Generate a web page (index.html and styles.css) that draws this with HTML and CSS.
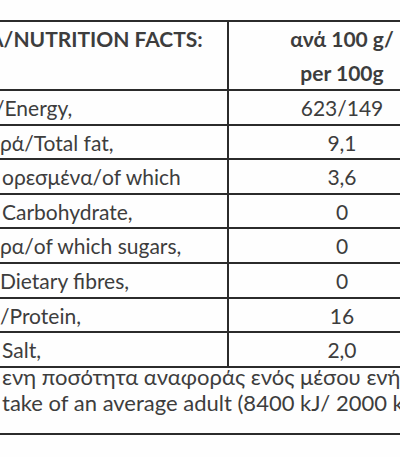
FILE: index.html
```html
<!DOCTYPE html>
<html lang="el">
    <head>
        <meta charset="UTF-8" />
        <meta name="viewport" content="width=device-width, initial-scale=1.0" />
        <link rel="stylesheet" href="styles.css">
        <title>Nutrition facts</title>
    </head>
    <body>
        <main class="label">
            <section class="facts">
                <div class="cell name head"><span class="cut cut-a">Α</span>/NUTRITION FACTS:</div>
                <div class="cell value head">ανά 100 g/<br />per 100g</div>

                <div class="cell name"><span class="cut cut-slash">/</span>Energy,</div>
                <div class="cell value">623/149</div>

                <div class="cell name">ρά/Total fat,</div>
                <div class="cell value">9,1</div>

                <div class="cell name indent">ορεσμένα/of which</div>
                <div class="cell value">3,6</div>

                <div class="cell name indent">Carbohydrate,</div>
                <div class="cell value">0</div>

                <div class="cell name">ρα/of which sugars,</div>
                <div class="cell value">0</div>

                <div class="cell name">Dietary fibres,</div>
                <div class="cell value">0</div>

                <div class="cell name">/Protein,</div>
                <div class="cell value">16</div>

                <div class="cell name indent">Salt,</div>
                <div class="cell value">2,0</div>

                <div class="cell note">
                    <p>ενη ποσότητα αναφοράς ενός μέσου ενήλικα /</p>
                    <p>take of an average adult (8400 kJ/ 2000 kcal)</p>
                </div>
            </section>
        </main>
    </body>
</html>
```

FILE: styles.css
```css
* {
    margin: 0;
    padding: 0;
    box-sizing: border-box;
}
:root {
    --ink: #3d3d3d;
    --rule: #2b2b2b;
    --paper: #fefefe;
}
html,
body {
    overflow: hidden;
}
body {
    background-color: var(--paper);
    color: var(--ink);
    font-family: 'Lato', 'Open Sans', sans-serif;
    font-size: 21px;
    line-height: 34px;
}

.label {
    padding-top: 20px;
    width: 455px;
}

/* ===== table ===== */
.facts {
    display: grid;
    grid-template-columns: 229px 226px;
    grid-template-rows: 69px repeat(8, 34.6px) 67px;
    border-top: 2px solid var(--rule);
}

.cell {
    border-bottom: 2px solid var(--rule);
    white-space: nowrap;
}

.name {
    border-right: 2px solid var(--rule);
}

.indent {
    padding-left: 2px;
}

.value {
    text-align: center;
}

.head {
    font-weight: 700;
}

/* letters cut by the edge of the photo */
.cut {
    display: inline-block;
}
.cut-a {
    margin-left: -11px;
}
.cut-slash {
    margin-left: -5px;
}

/* ===== footnote ===== */
.note {
    grid-column: 1 / -1;
    font-size: 22px;
    line-height: 26px;
    padding-left: 2px;
}
.note p:first-child {
    margin-top: -4px;
}
```
